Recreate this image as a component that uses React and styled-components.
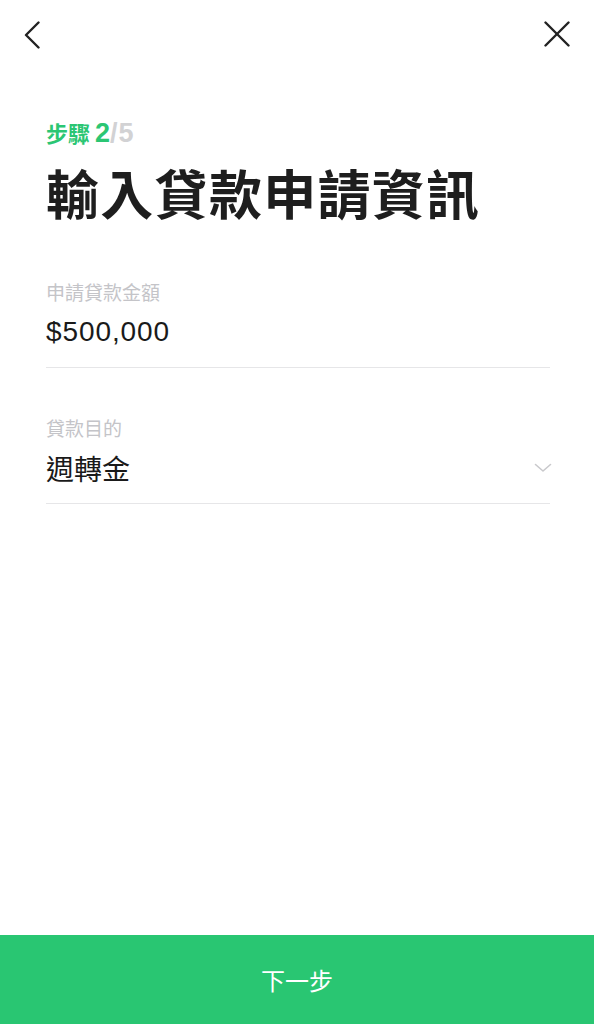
import React from "react";
import styled, { createGlobalStyle } from "styled-components";

const GlobalStyle = createGlobalStyle`
  html, body { margin: 0; padding: 0; background: #ffffff; }
  body {
    font-family: "Liberation Sans", "Noto Sans CJK TC", "Noto Sans CJK SC", sans-serif;
    color: #1c1c1c;
    -webkit-font-smoothing: antialiased;
  }
  * { box-sizing: border-box; }
`;

const Page = styled.div`
  min-height: 1024px;
  display: flex;
  flex-direction: column;
  background: #ffffff;
`;

const Header = styled.header`
  height: 70px;
  display: flex;
  align-items: center;
  justify-content: space-between;
  padding: 0 24px 0 24px;
`;

const IconButton = styled.button`
  border: none;
  background: transparent;
  padding: 0;
  display: flex;
  align-items: center;
  justify-content: center;
  cursor: pointer;
  width: ${(p) => p.$w}px;
  height: ${(p) => p.$h}px;
  margin-top: ${(p) => p.$mt || 0}px;
  svg { display: block; }
`;

const Content = styled.main`
  padding: 0 44px 0 46px;
  display: flex;
  flex-direction: column;
`;

const StepLabel = styled.div`
  margin-top: 47px;
  font-size: 22px;
  line-height: 30px;
  font-weight: 700;
  color: #2bc673;
  font-family: "Noto Sans CJK TC", sans-serif;
  display: flex;
  align-items: baseline;
`;

const StepNum = styled.span`
  font-family: "Liberation Sans", sans-serif;
  font-weight: 700;
  font-size: 27px;
  color: ${(p) => (p.$muted ? "#d2d2d4" : "#2bc673")};
  margin-left: ${(p) => (p.$muted ? "0px" : "5px")};
  letter-spacing: ${(p) => (p.$muted ? "1px" : "0")};
`;

const Title = styled.h1`
  margin: 12px 0 0 0;
  font-family: "Noto Sans CJK TC", sans-serif;
  font-size: 53px;
  line-height: 64px;
  font-weight: 700;
  letter-spacing: 1.3px;
  color: #1e1e1e;
`;

const Field = styled.div`
  margin-top: ${(p) => p.$mt}px;
  border-bottom: 1px solid #e6e6e8;
  padding-bottom: 15px;
  display: flex;
  flex-direction: column;
`;

const FieldLabel = styled.label`
  font-family: "Noto Sans CJK TC", sans-serif;
  font-size: 19px;
  line-height: 24px;
  color: #c4c4c8;
`;

const ValueRow = styled.div`
  margin-top: 8px;
  display: flex;
  align-items: center;
  justify-content: space-between;
`;

const FieldValue = styled.div`
  font-family: ${(p) =>
    p.$cjk ? `"Noto Sans CJK TC", sans-serif` : `"Liberation Sans", sans-serif`};
  font-size: 28px;
  line-height: 40px;
  letter-spacing: ${(p) => (p.$cjk ? 0 : 0.9)}px;
  color: #1a1a1a;
`;

const Chevron = styled.span`
  display: flex;
  margin-right: -2px;
`;

const NextButton = styled.button`
  margin-top: auto;
  height: 89px;
  width: 100%;
  border: none;
  background: #29c672;
  color: #ffffff;
  font-family: "Noto Sans CJK TC", sans-serif;
  font-size: 24px;
  letter-spacing: 0;
  display: flex;
  align-items: center;
  justify-content: center;
  cursor: pointer;
`;

export default function App() {
  return (
    <>
      <GlobalStyle />
      <Page>
        <Header>
          <IconButton $w={16} $h={28} aria-label="back">
            <svg width="16" height="28" viewBox="0 0 16 28" fill="none">
              <polyline
                points="14.5,1.5 2,14 14.5,26.5"
                stroke="#222"
                strokeWidth="2.4"
                strokeLinecap="round"
                strokeLinejoin="round"
              />
            </svg>
          </IconButton>
          <IconButton $w={26} $h={26} $mt={-2} aria-label="close">
            <svg width="26" height="26" viewBox="0 0 26 26" fill="none">
              <line x1="1.5" y1="1.5" x2="24.5" y2="24.5" stroke="#222" strokeWidth="2.4" strokeLinecap="round" />
              <line x1="24.5" y1="1.5" x2="1.5" y2="24.5" stroke="#222" strokeWidth="2.4" strokeLinecap="round" />
            </svg>
          </IconButton>
        </Header>
        <Content>
          <StepLabel>
            步驟<StepNum>2</StepNum>
            <StepNum $muted>/5</StepNum>
          </StepLabel>
          <Title>輸入貸款申請資訊</Title>
          <Field $mt={56}>
            <FieldLabel>申請貸款金額</FieldLabel>
            <ValueRow>
              <FieldValue>$500,000</FieldValue>
            </ValueRow>
          </Field>
          <Field $mt={48}>
            <FieldLabel>貸款目的</FieldLabel>
            <ValueRow>
              <FieldValue $cjk>週轉金</FieldValue>
              <Chevron>
                <svg width="18" height="10" viewBox="0 0 18 10" fill="none">
                  <polyline
                    points="1.5,1.5 9,8 16.5,1.5"
                    stroke="#c9c9cc"
                    strokeWidth="1.6"
                    strokeLinecap="round"
                    strokeLinejoin="round"
                  />
                </svg>
              </Chevron>
            </ValueRow>
          </Field>
        </Content>
        <NextButton>下一步</NextButton>
      </Page>
    </>
  );
}
